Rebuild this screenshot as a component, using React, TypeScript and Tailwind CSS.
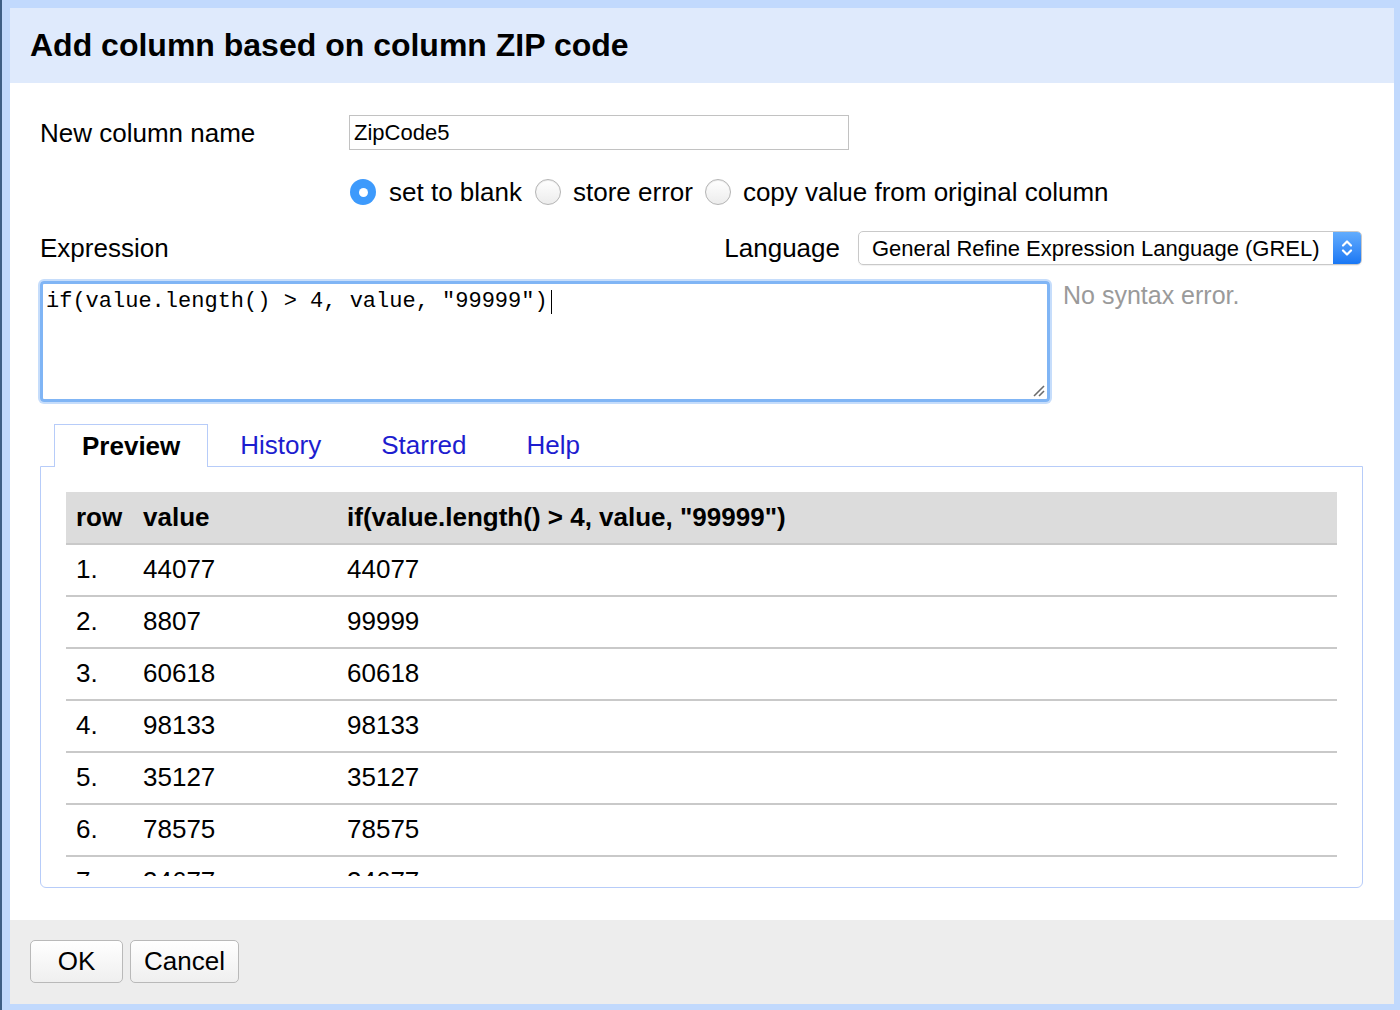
import React from "react";

const rows = [
  { n: "1.", value: "44077", result: "44077" },
  { n: "2.", value: "8807", result: "99999" },
  { n: "3.", value: "60618", result: "60618" },
  { n: "4.", value: "98133", result: "98133" },
  { n: "5.", value: "35127", result: "35127" },
  { n: "6.", value: "78575", result: "78575" },
  { n: "7.", value: "34677", result: "34677" },
];

const Radio = ({ checked }: { checked?: boolean }) =>
  checked ? (
    <span className="block w-[26px] h-[26px] rounded-full bg-[#3d9afc] flex items-center justify-center shrink-0">
      <span className="block w-[9px] h-[9px] rounded-full bg-white" />
    </span>
  ) : (
    <span className="block w-[26px] h-[26px] rounded-full border border-[#b4b4b4] bg-gradient-to-b from-white to-[#ececec] shadow-[inset_0_1px_1px_rgba(0,0,0,0.08)] shrink-0" />
  );

const App = () => {
  return (
    <div className="w-[1400px] h-[1010px] bg-[#c1d9fd] border-l-2 border-[#3e5f86] pl-[8px] pt-[8px] pr-[6px] pb-[6px] flex font-['Liberation_Sans',Arial,sans-serif] text-black">
      <div className="flex-1 flex flex-col bg-white">
        {/* header */}
        <div className="h-[75px] bg-[#dfeafc] flex items-center pl-[20px]">
          <h1 className="text-[32px] font-bold leading-none mt-[-2px]">Add column based on column ZIP code</h1>
        </div>

        {/* body */}
        <div className="flex-1 flex flex-col">
          <div className="mt-[32px] pl-[30px] flex items-center">
            <div className="w-[309px] text-[26px] leading-none">New column name</div>
            <div className="w-[500px] h-[35px] border border-[#c2c2c2] px-[4px] flex items-center text-[22px]">
              ZipCode5
            </div>
          </div>

          <div className="mt-[27px] h-[30px] pl-[340px] flex items-center text-[26px]">
            <Radio checked />
            <span className="ml-[13px]">set to blank</span>
            <span className="ml-[13px]"><Radio /></span>
            <span className="ml-[12px]">store error</span>
            <span className="ml-[12px]"><Radio /></span>
            <span className="ml-[12px]">copy value from original column</span>
          </div>

          <div className="mt-[24px] h-[34px] pl-[30px] pr-[32px] flex items-center justify-between text-[26px]">
            <span>Expression</span>
            <div className="flex items-center gap-[18px]">
              <span>Language</span>
              <div className="w-[504px] h-[34px] border border-[#c9c9c9] rounded-[5px] flex items-center overflow-hidden shadow-[0_1px_1px_rgba(0,0,0,0.06)]">
                <span className="flex-1 pl-[13px] text-[22px]">General Refine Expression Language (GREL)</span>
                <span className="w-[28px] h-full bg-gradient-to-b from-[#62acfd] to-[#1877f4] flex items-center justify-center">
                  <svg width="14" height="22" viewBox="0 0 14 22" fill="none" stroke="white" strokeWidth="2.2" strokeLinecap="round" strokeLinejoin="round">
                    <path d="M3 8.5 L7 4.5 L11 8.5" />
                    <path d="M3 13.5 L7 17.5 L11 13.5" />
                  </svg>
                </span>
              </div>
            </div>
          </div>

          <div className="mt-[16px] flex items-start">
            <div className="relative ml-[30px] w-[1010px] h-[121px] border-[3px] border-[#80b5f5] rounded-[4px] shadow-[0_0_0_2px_#c6ddfb] pl-[3px] pt-[5px]">
              <div className="flex items-center font-['Liberation_Mono','Courier_New',monospace] text-[22px] leading-[25px]">
                <span>if(value.length() &gt; 4, value, "99999")</span>
                <span className="w-[1px] h-[24px] bg-black ml-[3px]" />
              </div>
              <svg className="absolute right-[1px] bottom-[1px]" width="14" height="14" viewBox="0 0 14 14" stroke="#6b6b6b" strokeWidth="1.6">
                <path d="M2 12 L12 2" />
                <path d="M7 12 L12 7" />
              </svg>
            </div>
            <span className="ml-[13px] mt-[-4px] text-[25px] text-[#9a9a9a]">No syntax error.</span>
          </div>

          <div className="mt-[22px] pl-[30px] pr-[31px] flex flex-col">
            <div className="flex items-end pl-[14px] text-[26px]">
              <div className="relative z-10 h-[43px] mb-[-1px] border border-b-0 border-[#b7ccf9] bg-white px-[27px] flex items-center font-bold">
                Preview
              </div>
              <span className="h-[42px] flex items-center ml-[32px] text-[#1d1dcf]">History</span>
              <span className="h-[42px] flex items-center ml-[60px] text-[#1d1dcf]">Starred</span>
              <span className="h-[42px] flex items-center ml-[60px] text-[#1d1dcf]">Help</span>
            </div>
            <div className="h-[422px] border border-[#b7ccf9] rounded-b-[6px] px-[25px] pt-[25px] pb-[11px]">
              <div className="h-[384px] overflow-hidden text-[26px]">
                <div className="grid grid-cols-[67px_204px_1fr] h-[51px] items-center bg-[#dcdcdc] font-bold">
                  <span className="pl-[10px]">row</span>
                  <span className="pl-[10px]">value</span>
                  <span className="pl-[10px]">if(value.length() &gt; 4, value, "99999")</span>
                </div>
                {rows.map((r) => (
                  <div key={r.n} className="grid grid-cols-[67px_204px_1fr] h-[52px] items-center border-t-2 border-[#c9c9c9] pb-[2px]">
                    <span className="pl-[10px]">{r.n}</span>
                    <span className="pl-[10px]">{r.value}</span>
                    <span className="pl-[10px]">{r.result}</span>
                  </div>
                ))}
              </div>
            </div>
          </div>
        </div>

        {/* footer */}
        <div className="h-[84px] bg-[#ededed] pl-[20px] pt-[20px] flex items-start gap-[7px] text-[26px]">
          <button className="w-[93px] h-[43px] border border-[#b9b9b9] rounded-[5px] bg-gradient-to-b from-white to-[#efefef]">
            OK
          </button>
          <button className="w-[109px] h-[43px] border border-[#b9b9b9] rounded-[5px] bg-gradient-to-b from-white to-[#efefef]">
            Cancel
          </button>
        </div>
      </div>
    </div>
  );
};

export default App;
